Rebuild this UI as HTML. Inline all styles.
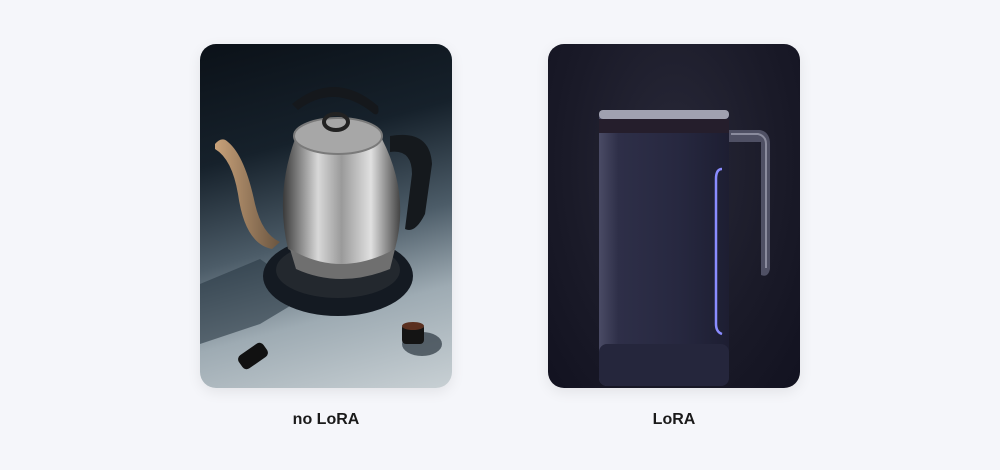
<!DOCTYPE html>
<html><head><style>
body{margin:0;width:1000px;height:470px;background:#f5f6fa;font-family:"Liberation Sans",sans-serif;position:relative;overflow:hidden}
.card{position:absolute;top:44px;width:252px;height:344px;border-radius:16px;overflow:hidden;box-shadow:0 4px 14px rgba(0,0,0,.08)}
.lbl{position:absolute;top:411px;width:252px;text-align:center;font-weight:bold;font-size:16px;color:#1a1a1a}
</style></head><body>
<div class="card" style="left:200px;background:linear-gradient(165deg,#0b1118 0%,#16212b 30%,#4c5c68 55%,#9eabb3 75%,#c8d0d4 100%)">
<svg width="252" height="344" viewBox="0 0 252 344">
<defs>
<linearGradient id="m" x1="0" x2="1"><stop offset="0" stop-color="#3a3a3a"/><stop offset=".3" stop-color="#d8d8d8"/><stop offset=".5" stop-color="#9a9a9a"/><stop offset=".75" stop-color="#e0e0e0"/><stop offset="1" stop-color="#444"/></linearGradient>
<linearGradient id="s" x1="0" x2="1"><stop offset="0" stop-color="#c9a27a"/><stop offset="1" stop-color="#6a5540"/></linearGradient>
</defs>
<path d="M0 240 L60 215 L110 250 L60 280 L0 300Z" fill="#2a3844" opacity=".6"/>
<ellipse cx="138" cy="232" rx="75" ry="40" fill="#141a22"/>
<ellipse cx="138" cy="226" rx="62" ry="28" fill="#23282e"/>
<path d="M92 60 Q135 25 178 62 Q180 72 174 70 Q135 38 98 66Z" fill="#15181c"/>
<path d="M190 92 Q230 85 232 120 L225 170 Q215 190 205 185 L212 130 Q212 105 190 108Z" fill="#15191d"/>
<path d="M15 100 Q22 92 28 98 Q45 112 55 160 Q62 190 80 198 L72 205 Q45 200 38 150 Q32 115 15 105Z" fill="url(#s)"/>
<path d="M95 95 Q138 68 182 95 Q210 150 195 205 Q140 238 88 205 Q75 150 95 95Z" fill="url(#m)"/>
<ellipse cx="138" cy="92" rx="44" ry="18" fill="#a7a7a7" stroke="#7a7a7a" stroke-width="2"/>
<ellipse cx="136" cy="78" rx="12" ry="8" fill="none" stroke="#222" stroke-width="4"/>
<path d="M90 205 Q140 235 195 205 L190 225 Q140 245 96 225Z" fill="#6f6f6f"/>
<ellipse cx="222" cy="300" rx="20" ry="12" fill="#2b3640" opacity=".7"/>
<rect x="202" y="280" width="22" height="20" rx="4" fill="#141414"/>
<ellipse cx="213" cy="282" rx="11" ry="4" fill="#5a3020"/>
<rect x="38" y="304" width="30" height="16" rx="5" fill="#111" transform="rotate(-35 53 312)"/>
</svg></div>
<div class="card" style="left:548px;background:radial-gradient(ellipse at 50% 35%,#282838 0%,#1a1a28 60%,#121220 100%)">
<svg width="252" height="344" viewBox="0 0 252 344">
<defs><linearGradient id="b" x1="0" x2="1"><stop offset="0" stop-color="#4a4b65"/><stop offset=".15" stop-color="#2e2f48"/><stop offset=".6" stop-color="#272840"/><stop offset="1" stop-color="#1d1e32"/></linearGradient></defs>
<path d="M178 86 L212 86 Q222 88 222 100 L222 225 Q220 234 213 231 L213 98 L178 98Z" fill="#4f5064"/>
<path d="M183 90 L210 90 Q218 92 218 100 L218 224" stroke="#8a8b9d" stroke-width="2" fill="none"/>
<rect x="51" y="66" width="130" height="276" rx="8" fill="url(#b)"/>
<rect x="51" y="66" width="130" height="9" rx="4" fill="#a0a1b0"/>
<rect x="51" y="75" width="130" height="14" fill="#251e2c"/>
<rect x="51" y="300" width="130" height="42" rx="8" fill="#25263c"/>
<path d="M174 125 Q168 125 168 135 L168 280 Q168 288 174 290" stroke="#8a8cff" stroke-width="2.5" fill="none"/>
</svg></div>
<div class="lbl" style="left:200px">no LoRA</div>
<div class="lbl" style="left:548px">LoRA</div>
</body></html>
